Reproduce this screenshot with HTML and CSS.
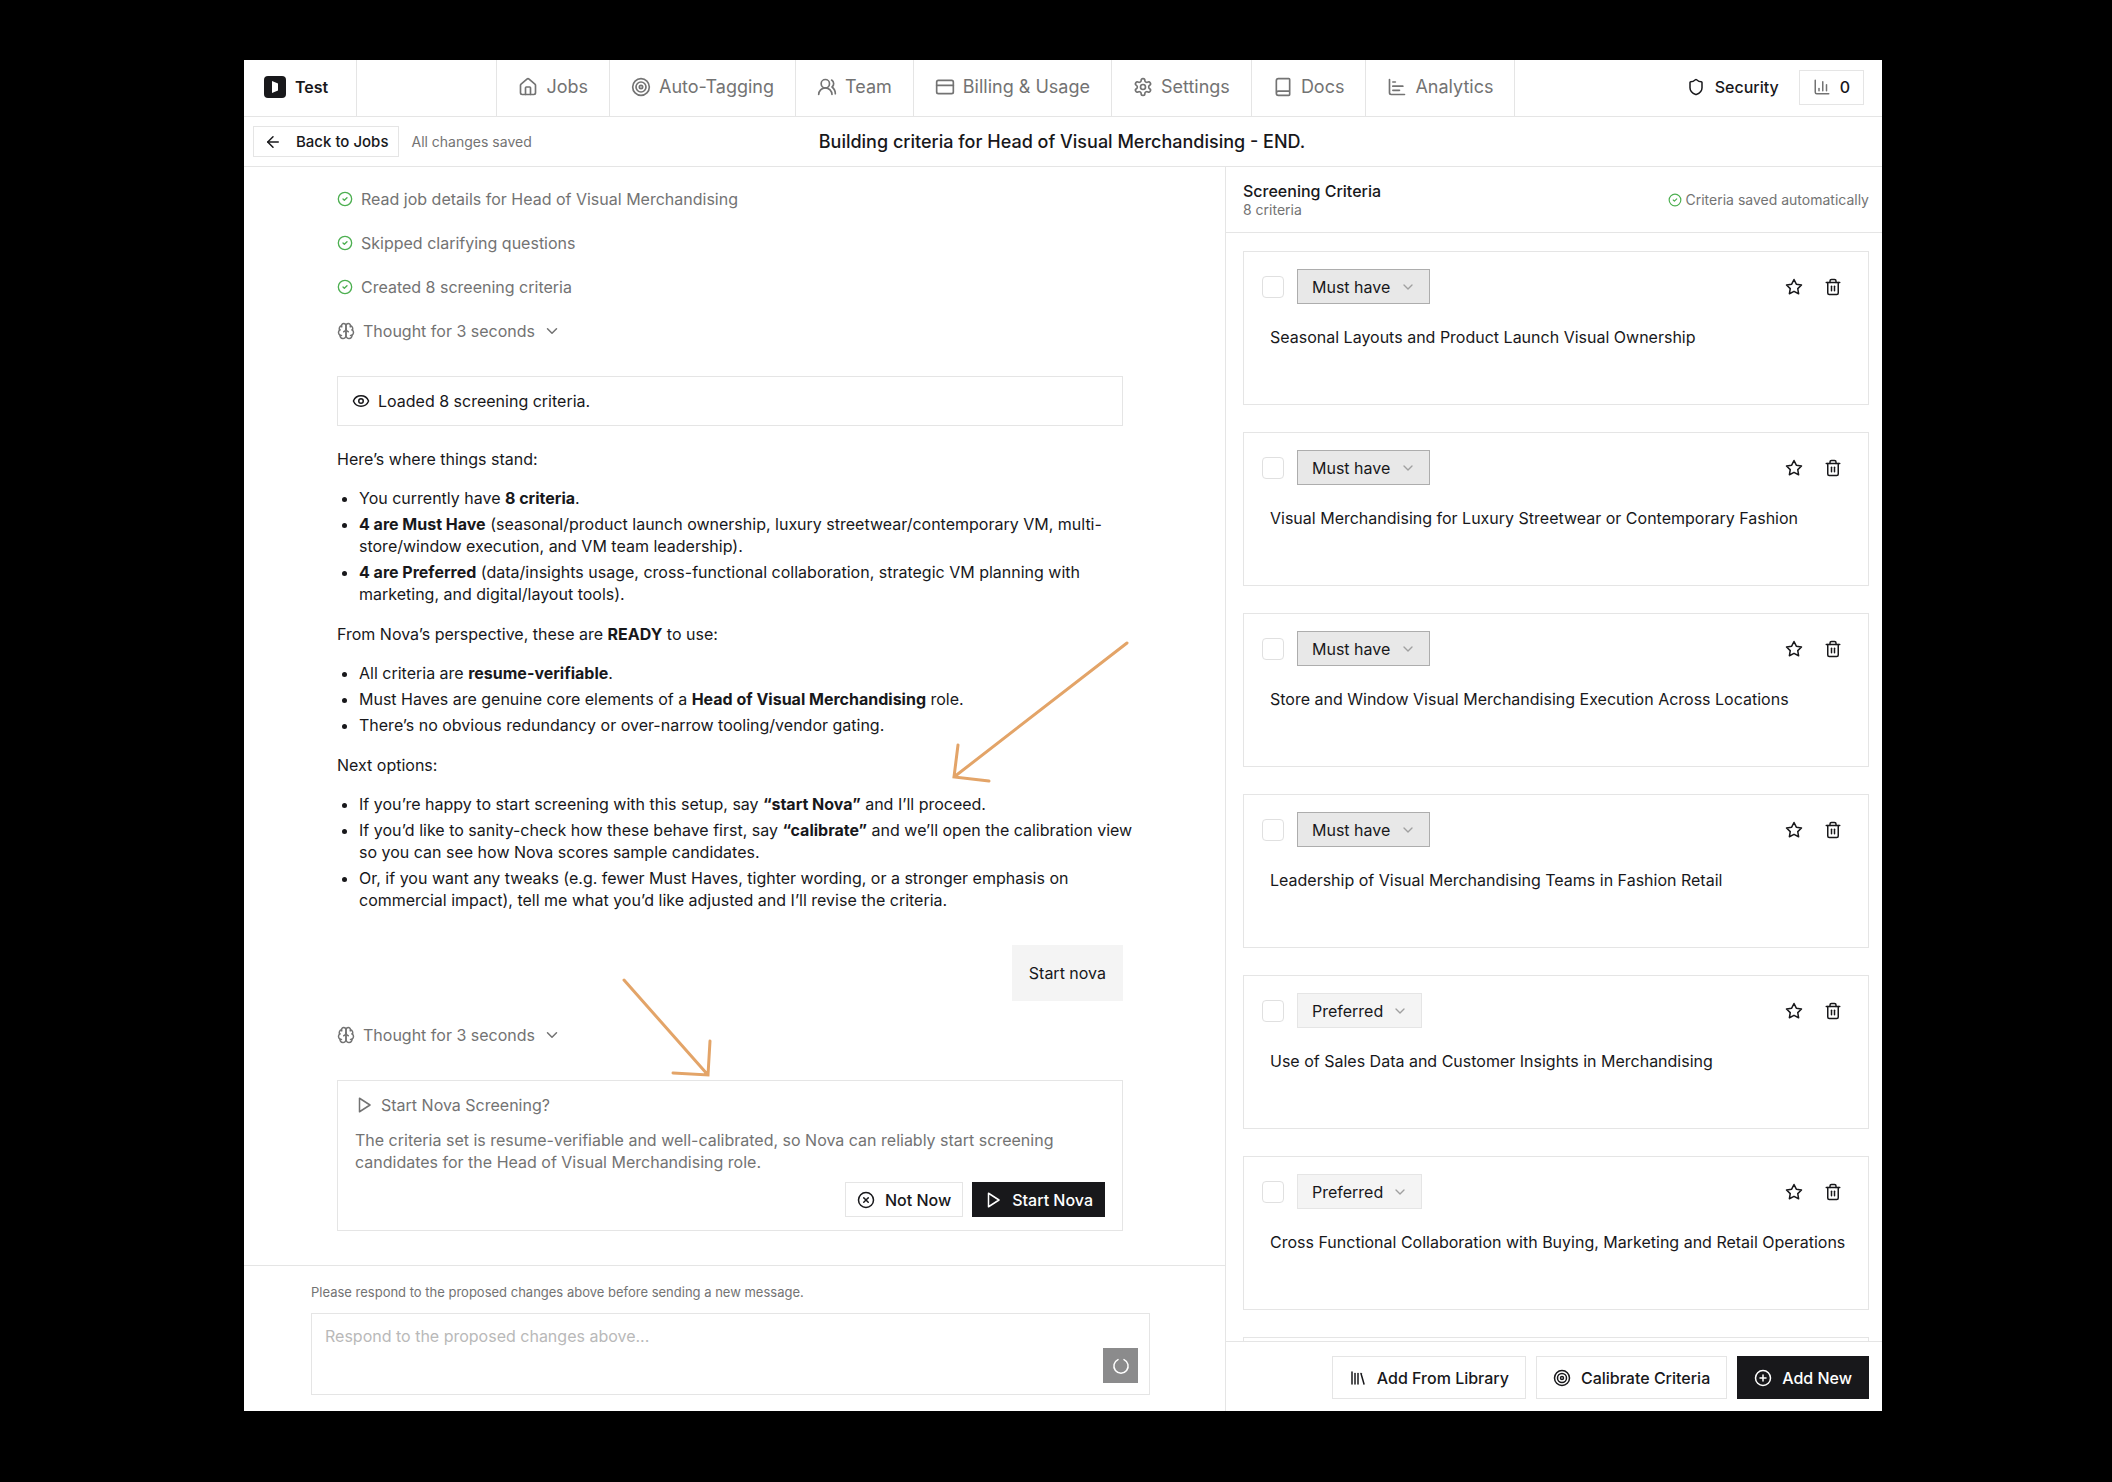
FILE: index.html
```html
<!DOCTYPE html>
<html lang="en">
<head>
  <meta charset="UTF-8">
  <meta name="viewport" content="width=device-width, initial-scale=1.0">
  <title>Building criteria</title>
  <link rel="stylesheet" href="styles.css">
</head>
<body>
  <!-- Icons -->
  <svg class="sprite" xmlns="http://www.w3.org/2000/svg">
    <symbol id="i-home" viewBox="0 0 24 24"><path d="M15 21v-8a1 1 0 0 0-1-1h-4a1 1 0 0 0-1 1v8"/><path d="M3 10a2 2 0 0 1 .7-1.5l7-6a2 2 0 0 1 2.600 0l7 6A2 2 0 0 1 21 10v9a2 2 0 0 1-2 2H5a2 2 0 0 1-2-2z"/></symbol>
    <symbol id="i-target" viewBox="0 0 24 24"><circle cx="12" cy="12" r="10"/><circle cx="12" cy="12" r="6"/><circle cx="12" cy="12" r="2"/></symbol>
    <symbol id="i-users" viewBox="0 0 24 24"><path d="M18 21a8 8 0 0 0-16 0"/><circle cx="10" cy="8" r="5"/><path d="M22 20c0-3.370-2-6.500-4-8a5 5 0 0 0-.450-8.300"/></symbol>
    <symbol id="i-card" viewBox="0 0 24 24"><rect x="2" y="4" width="20" height="16" rx="2"/><path d="M2 10h20"/></symbol>
    <symbol id="i-gear" viewBox="0 0 24 24"><path d="M12.220 2h-.440a2 2 0 0 0-2 2v.180a2 2 0 0 1-1 1.730l-.430.250a2 2 0 0 1-2 0l-.150-.080a2 2 0 0 0-2.730.730l-.220.380a2 2 0 0 0 .730 2.730l.150.100a2 2 0 0 1 1 1.720v.510a2 2 0 0 1-1 1.740l-.150.090a2 2 0 0 0-.730 2.730l.220.380a2 2 0 0 0 2.730.730l.150-.080a2 2 0 0 1 2 0l.430.250a2 2 0 0 1 1 1.730V20a2 2 0 0 0 2 2h.440a2 2 0 0 0 2-2v-.180a2 2 0 0 1 1-1.730l.430-.250a2 2 0 0 1 2 0l.150.080a2 2 0 0 0 2.730-.730l.220-.390a2 2 0 0 0-.730-2.730l-.150-.080a2 2 0 0 1-1-1.740v-.500a2 2 0 0 1 1-1.740l.150-.090a2 2 0 0 0 .730-2.730l-.220-.380a2 2 0 0 0-2.730-.730l-.150.080a2 2 0 0 1-2 0l-.430-.250a2 2 0 0 1-1-1.730V4a2 2 0 0 0-2-2z"/><circle cx="12" cy="12" r="3"/></symbol>
    <symbol id="i-book" viewBox="0 0 24 24"><path d="M4 19.500v-15A2.500 2.500 0 0 1 6.500 2H19a1 1 0 0 1 1 1v18a1 1 0 0 1-1 1H6.500a1 1 0 0 1 0-5H20"/></symbol>
    <symbol id="i-bars" viewBox="0 0 24 24"><path d="M3 3v16a2 2 0 0 0 2 2h16"/><path d="M7 16h8"/><path d="M7 11h12"/><path d="M7 6h3"/></symbol>
    <symbol id="i-shield" viewBox="0 0 24 24"><path d="M20 13c0 5-3.500 7.500-7.660 8.950a1 1 0 0 1-.670-.010C7.500 20.500 4 18 4 13V6a1 1 0 0 1 1-1c2 0 4.500-1.200 6.240-2.720a1.170 1.170 0 0 1 1.520 0C14.510 3.810 17 5 19 5a1 1 0 0 1 1 1z"/></symbol>
    <symbol id="i-chart" viewBox="0 0 24 24"><path d="M3 3v16a2 2 0 0 0 2 2h16"/><path d="M18 17V9"/><path d="M13 17V5"/><path d="M8 17v-3"/></symbol>
    <symbol id="i-back" viewBox="0 0 24 24"><path d="m12 19-7-7 7-7"/><path d="M19 12H5"/></symbol>
    <symbol id="i-check" viewBox="0 0 24 24"><circle cx="12" cy="12" r="10"/><path d="m9 12 2 2 4-4"/></symbol>
    <symbol id="i-brain" viewBox="0 0 24 24"><path d="M12 5a3 3 0 1 0-5.997.125 4 4 0 0 0-2.526 5.770 4 4 0 0 0 .556 6.588A4 4 0 1 0 12 18Z"/><path d="M12 5a3 3 0 1 1 5.997.125 4 4 0 0 1 2.526 5.770 4 4 0 0 1-.556 6.588A4 4 0 1 1 12 18Z"/><path d="M15 13a4.500 4.500 0 0 1-3-4 4.500 4.500 0 0 1-3 4"/><path d="M17.600 6.500a3 3 0 0 0 .400-1.375M6 5.125A3 3 0 0 0 6.400 6.500M3.477 10.900a4 4 0 0 1 .585-.396M19.938 10.500a4 4 0 0 1 .585.396M6 18a4 4 0 0 1-1.967-.516M19.967 17.480A4 4 0 0 1 18 18"/></symbol>
    <symbol id="i-down" viewBox="0 0 24 24"><path d="m6 9 6 6 6-6"/></symbol>
    <symbol id="i-eye" viewBox="0 0 24 24"><path d="M2.060 12.350a1 1 0 0 1 0-.700 10.750 10.750 0 0 1 19.880 0 1 1 0 0 1 0 .700 10.750 10.750 0 0 1-19.880 0"/><circle cx="12" cy="12" r="3"/></symbol>
    <symbol id="i-play" viewBox="0 0 24 24"><path d="M6 3l14 9-14 9z"/></symbol>
    <symbol id="i-cancel" viewBox="0 0 24 24"><circle cx="12" cy="12" r="10"/><path d="m15 9-6 6"/><path d="m9 9 6 6"/></symbol>
    <symbol id="i-plus" viewBox="0 0 24 24"><circle cx="12" cy="12" r="10"/><path d="M8 12h8"/><path d="M12 8v8"/></symbol>
    <symbol id="i-library" viewBox="0 0 24 24"><path d="m16 6 4 14"/><path d="M12 6v14"/><path d="M8 6v14"/><path d="M4 4v16"/></symbol>
    <symbol id="i-star" viewBox="0 0 24 24"><path d="m12 2 3.090 6.260L22 9.270l-5 4.870 1.180 6.880L12 17.770l-6.180 3.250L7 14.140 2 9.270l6.910-1.010z"/></symbol>
    <symbol id="i-trash" viewBox="0 0 24 24"><path d="M3 6h18"/><path d="M19 6v14a2 2 0 0 1-2 2H7a2 2 0 0 1-2-2V6"/><path d="M8 6V4a2 2 0 0 1 2-2h4a2 2 0 0 1 2 2v2"/><path d="M10 11v6"/><path d="M14 11v6"/></symbol>
    <symbol id="i-loader" viewBox="0 0 24 24"><path d="M16 3.500a9.500 9.500 0 1 1-8 0"/></symbol>
  </svg>

  <div class="app">
    <header class="topbar">
      <a href="#" class="brand">
        <svg class="logo" viewBox="0 0 22 22"><rect width="22" height="22" rx="4" fill="#18181b"/><path d="M8 5l6 2.500v7l-6 2.500z" fill="#fff"/></svg>
        <span>Test</span>
      </a>
      <nav class="main-nav">
        <a href="#" class="nav-link"><svg class="icon"><use href="#i-home"/></svg>Jobs</a>
        <a href="#" class="nav-link"><svg class="icon"><use href="#i-target"/></svg>Auto-Tagging</a>
        <a href="#" class="nav-link"><svg class="icon"><use href="#i-users"/></svg>Team</a>
        <a href="#" class="nav-link"><svg class="icon"><use href="#i-card"/></svg>Billing &amp; Usage</a>
        <a href="#" class="nav-link"><svg class="icon"><use href="#i-gear"/></svg>Settings</a>
        <a href="#" class="nav-link"><svg class="icon"><use href="#i-book"/></svg>Docs</a>
        <a href="#" class="nav-link"><svg class="icon"><use href="#i-bars"/></svg>Analytics</a>
      </nav>
      <div class="top-actions">
        <a href="#" class="security"><svg class="icon"><use href="#i-shield"/></svg>Security</a>
        <button type="button" class="btn usage"><svg class="icon"><use href="#i-chart"/></svg>0</button>
      </div>
    </header>

    <div class="subbar">
      <div class="subbar-left">
        <button type="button" class="btn back"><svg class="icon"><use href="#i-back"/></svg>Back to Jobs</button>
        <span class="save-state">All changes saved</span>
      </div>
      <h1 class="page-title">Building criteria for Head of Visual Merchandising - END.</h1>
    </div>

    <main class="workspace">
      <!-- Chat -->
      <section class="chat">
        <div class="messages">
          <p class="step"><svg class="icon check"><use href="#i-check"/></svg>Read job details for Head of Visual Merchandising</p>
          <p class="step"><svg class="icon check"><use href="#i-check"/></svg>Skipped clarifying questions</p>
          <p class="step"><svg class="icon check"><use href="#i-check"/></svg>Created 8 screening criteria</p>
          <button type="button" class="thought"><svg class="icon"><use href="#i-brain"/></svg>Thought for 3 seconds<svg class="icon"><use href="#i-down"/></svg></button>

          <div class="notice"><svg class="icon"><use href="#i-eye"/></svg>Loaded 8 screening criteria.</div>

          <div class="prose">
            <p>Here’s where things stand:</p>
            <ul>
              <li>You currently have <strong>8 criteria</strong>.</li>
              <li><strong>4 are Must Have</strong> (seasonal/product launch ownership, luxury streetwear/contemporary VM, multi-store/window execution, and VM team leadership).</li>
              <li><strong>4 are Preferred</strong> (data/insights usage, cross-functional collaboration, strategic VM planning with marketing, and digital/layout tools).</li>
            </ul>
            <p>From Nova’s perspective, these are <strong>READY</strong> to use:</p>
            <ul>
              <li>All criteria are <strong>resume-verifiable</strong>.</li>
              <li>Must Haves are genuine core elements of a <strong>Head of Visual Merchandising</strong> role.</li>
              <li>There’s no obvious redundancy or over-narrow tooling/vendor gating.</li>
            </ul>
            <p>Next options:</p>
            <ul>
              <li>If you’re happy to start screening with this setup, say <strong>“start Nova”</strong> and I’ll proceed.</li>
              <li>If you’d like to sanity-check how these behave first, say <strong>“calibrate”</strong> and we’ll open the calibration view so you can see how Nova scores sample candidates.</li>
              <li>Or, if you want any tweaks (e.g. fewer Must Haves, tighter wording, or a stronger emphasis on commercial impact), tell me what you’d like adjusted and I’ll revise the criteria.</li>
            </ul>
          </div>

          <p class="bubble">Start nova</p>

          <button type="button" class="thought"><svg class="icon"><use href="#i-brain"/></svg>Thought for 3 seconds<svg class="icon"><use href="#i-down"/></svg></button>

          <div class="proposal">
            <h2><svg class="icon"><use href="#i-play"/></svg>Start Nova Screening?</h2>
            <p>The criteria set is resume-verifiable and well-calibrated, so Nova can reliably start screening candidates for the Head of Visual Merchandising role.</p>
            <div class="proposal-actions">
              <button type="button" class="btn"><svg class="icon"><use href="#i-cancel"/></svg>Not Now</button>
              <button type="button" class="btn dark"><svg class="icon"><use href="#i-play"/></svg>Start Nova</button>
            </div>
          </div>

          <!-- Pointer arrows over the conversation -->
          <svg class="arrow arrow-reply" viewBox="0 0 180 144"><path d="M176 4 3 138M7 106 3 138l35 4"/></svg>
          <svg class="arrow arrow-card" viewBox="0 0 92 104"><path d="M4 4 88 99M90 65l-2 34-35-2"/></svg>
        </div>

        <form class="composer">
          <label for="reply">Please respond to the proposed changes above before sending a new message.</label>
          <div class="composer-box">
            <textarea id="reply" placeholder="Respond to the proposed changes above..."></textarea>
            <button type="button" class="send" aria-label="Sending"><svg class="icon"><use href="#i-loader"/></svg></button>
          </div>
        </form>
      </section>

      <!-- Criteria -->
      <aside class="criteria">
        <div class="criteria-head">
          <div>
            <h2>Screening Criteria</h2>
            <p>8 criteria</p>
          </div>
          <p class="autosave"><svg class="icon check"><use href="#i-check"/></svg>Criteria saved automatically</p>
        </div>
        <div class="criteria-list" id="criteria-list"></div>
        <div class="criteria-foot">
          <button type="button" class="btn"><svg class="icon"><use href="#i-library"/></svg>Add From Library</button>
          <button type="button" class="btn"><svg class="icon"><use href="#i-target"/></svg>Calibrate Criteria</button>
          <button type="button" class="btn dark"><svg class="icon"><use href="#i-plus"/></svg>Add New</button>
        </div>
      </aside>
    </main>
  </div>

  <script src="script.js"></script>
</body>
</html>
```

FILE: styles.css
```css
* {
  margin: 0;
  padding: 0;
  box-sizing: border-box;
}

body {
  height: 100vh;
  padding: 60px 230px 71px 244px;
  background-color: #000;
  color: #18181b;
  font-family: Inter, "Liberation Sans", sans-serif;
  font-size: 16px;
  line-height: 22px;
}

button,
select,
textarea {
  font: inherit;
  color: inherit;
}

button {
  cursor: pointer;
}

a {
  color: inherit;
  text-decoration: none;
}

.sprite {
  display: none;
}

.icon {
  width: 18px;
  height: 18px;
  flex: none;
  fill: none;
  stroke: currentColor;
  stroke-width: 2;
  stroke-linecap: round;
  stroke-linejoin: round;
}

.check {
  width: 16px;
  height: 16px;
  color: #4caf50;
}

.btn {
  display: inline-flex;
  align-items: center;
  gap: 10px;
  height: 35px;
  padding: 0 11px;
  border: 1px solid #e5e5e5;
  background-color: #fff;
  font-weight: 500;
  white-space: nowrap;
}

.btn.dark {
  border-color: #18181b;
  background-color: #18181b;
  color: #fff;
}

.app {
  display: flex;
  flex-direction: column;
  height: 100%;
  background-color: #fff;
}

/* Top bar */
.topbar {
  display: flex;
  justify-content: space-between;
  height: 57px;
  flex: none;
  border-bottom: 1px solid #e5e5e5;
}

.brand {
  display: flex;
  align-items: center;
  gap: 9px;
  padding: 0 28px 2px 20px;
  border-right: 1px solid #e5e5e5;
  font-weight: 600;
}

.logo {
  width: 22px;
  height: 22px;
}

.main-nav {
  display: flex;
  border-left: 1px solid #e5e5e5;
  color: #737373;
  font-size: 18px;
}

.nav-link {
  display: flex;
  align-items: center;
  gap: 8px;
  padding: 0 21px 2px;
  border-right: 1px solid #e5e5e5;
}

.nav-link .icon {
  width: 20px;
  height: 20px;
  stroke-width: 2;
}

.top-actions {
  display: flex;
  align-items: center;
  gap: 20px;
  padding: 0 18px 2px 32px;
}

.security {
  display: flex;
  align-items: center;
  gap: 10px;
  font-weight: 500;
}

.usage {
  gap: 9px;
  padding: 0 13px;
}

.usage .icon {
  color: #737373;
}

/* Sub bar */
.subbar {
  display: grid;
  grid-template-columns: 1fr auto 1fr;
  align-items: center;
  height: 50px;
  flex: none;
  padding: 0 11px 0 9px;
  border-bottom: 1px solid #e5e5e5;
}

.subbar-left {
  display: flex;
  align-items: center;
  gap: 12px;
}

.back {
  height: 31px;
  gap: 14px;
  padding: 0 10px;
  font-size: 15px;
}

.save-state {
  color: #737373;
  font-size: 14px;
}

.page-title {
  font-size: 18px;
  font-weight: 500;
}

/* Workspace */
.workspace {
  display: flex;
  flex: 1;
  min-height: 0;
}

.chat {
  flex: 3;
  display: flex;
  flex-direction: column;
  min-width: 0;
}

.messages {
  position: relative;
  display: flex;
  flex-direction: column;
  flex: 1;
  padding: 21px 102px 0 93px;
}

.step {
  display: flex;
  align-items: center;
  gap: 8px;
  margin-bottom: 22px;
  color: #737373;
}

.thought {
  display: flex;
  align-items: center;
  align-self: flex-start;
  gap: 8px;
  border: none;
  background: none;
  color: #737373;
}

.notice {
  display: flex;
  align-items: center;
  gap: 8px;
  margin: 34px 0 22px;
  padding: 13px 14px;
  border: 1px solid #e5e5e5;
}

.prose p {
  margin-bottom: 17px;
}

.prose ul {
  margin: 0 -16px 18px 0;
  padding-left: 22px;
}

.prose li + li {
  margin-top: 4px;
}

.bubble {
  align-self: flex-end;
  margin: 16px 0 23px;
  padding: 17px;
  background-color: #f4f4f4;
}

.proposal {
  margin-top: 34px;
  padding: 13px 17px;
  border: 1px solid #e5e5e5;
  color: #737373;
}

.proposal h2 {
  display: flex;
  align-items: center;
  gap: 8px;
  margin-bottom: 13px;
  font-size: 16px;
  font-weight: 400;
}

.proposal-actions {
  display: flex;
  justify-content: flex-end;
  gap: 9px;
  margin-top: 9px;
  color: #18181b;
}

.arrow {
  position: absolute;
  fill: none;
  stroke: #e3a468;
  stroke-width: 3;
  stroke-linecap: round;
}

.arrow-reply {
  top: 472px;
  right: 94px;
  width: 180px;
}

.arrow-card {
  top: 809px;
  left: 376px;
  width: 92px;
}

.composer {
  display: flex;
  flex-direction: column;
  gap: 10px;
  padding: 15px 75px 16px 67px;
  border-top: 1px solid #e5e5e5;
  font-size: 13px;
  color: #737373;
}

.composer-box {
  display: flex;
  align-items: flex-end;
  padding: 11px 11px 11px 13px;
  border: 1px solid #e5e5e5;
}

.composer-box textarea {
  flex: 1;
  height: 58px;
  border: none;
  outline: none;
  resize: none;
  background: none;
  font-size: 16px;
}

.composer-box textarea::placeholder {
  color: #b9b9b9;
}

.send {
  display: grid;
  place-items: center;
  width: 35px;
  height: 35px;
  border: none;
  background-color: #8b8b8c;
  color: #fff;
}

/* Criteria panel */
.criteria {
  flex: 2;
  display: flex;
  flex-direction: column;
  min-width: 657px;
  border-left: 1px solid #e5e5e5;
}

.criteria-head {
  display: flex;
  justify-content: space-between;
  align-items: center;
  height: 66px;
  flex: none;
  padding: 0 13px 0 17px;
  border-bottom: 1px solid #e5e5e5;
}

.criteria-head h2 {
  font-size: 16px;
  font-weight: 500;
  line-height: 20px;
}

.criteria-head p {
  color: #737373;
  font-size: 14px;
  line-height: 18px;
}

.autosave {
  display: flex;
  align-items: center;
  gap: 4px;
}

.autosave .check {
  width: 14px;
  height: 14px;
}

.criteria-list {
  display: flex;
  flex-direction: column;
  flex: 1;
  gap: 27px;
  min-height: 0;
  padding: 18px 13px 0 17px;
  overflow: hidden;
}

.criterion {
  flex: none;
  height: 154px;
  padding: 17px 18px 0;
  border: 1px solid #e5e5e5;
}

.criterion-top {
  display: flex;
  align-items: center;
  gap: 13px;
  margin-bottom: 22px;
}

.criterion-top input {
  width: 22px;
  height: 22px;
  appearance: none;
  border: 1px solid #e0e0e0;
  border-radius: 4px;
}

.level {
  position: relative;
  display: flex;
  align-items: center;
  margin-right: auto;
}

.level select {
  width: 125px;
  height: 35px;
  padding: 0 14px;
  appearance: none;
  border: 1px solid #e5e5e5;
  background-color: #f4f4f4;
}

.level.must select {
  width: 133px;
  border-color: #adadad;
  background-color: #e8e8e8;
}

.level .icon {
  position: absolute;
  right: 14px;
  width: 16px;
  height: 16px;
  color: #a0a0a0;
  pointer-events: none;
}

.icon-btn {
  display: grid;
  place-items: center;
  width: 26px;
  height: 26px;
  border: none;
  background: none;
}

.criterion-top .icon-btn:last-child {
  margin-right: 4px;
}

/* Keep long names on one line */
.criterion-text {
  padding-left: 8px;
  white-space: nowrap;
}

.criteria-foot {
  display: flex;
  justify-content: flex-end;
  gap: 10px;
  flex: none;
  padding: 14px 13px 12px;
  border-top: 1px solid #e5e5e5;
}

.criteria-foot .btn {
  height: 43px;
  padding: 0 16px;
}
```

FILE: script.js
```js
const criteria = [
  { text: 'Seasonal Layouts and Product Launch Visual Ownership', level: 'Must have' },
  { text: 'Visual Merchandising for Luxury Streetwear or Contemporary Fashion', level: 'Must have' },
  { text: 'Store and Window Visual Merchandising Execution Across Locations', level: 'Must have' },
  { text: 'Leadership of Visual Merchandising Teams in Fashion Retail', level: 'Must have' },
  { text: 'Use of Sales Data and Customer Insights in Merchandising', level: 'Preferred' },
  { text: 'Cross Functional Collaboration with Buying, Marketing and Retail Operations', level: 'Preferred' },
  { text: '', level: 'Preferred' }
];

const levels = ['Must have', 'Preferred'];
const list = document.getElementById('criteria-list');

criteria.forEach((item, i) => {
  const card = document.createElement('article');
  card.className = 'criterion';
  card.innerHTML = `
    <div class="criterion-top">
      <input type="checkbox" id="pick-${i}" aria-label="Select criterion">
      <div class="level ${item.level === 'Must have' ? 'must' : ''}">
        <select aria-label="Importance">
          ${levels.map(l => `<option ${l === item.level ? 'selected' : ''}>${l}</option>`).join('')}
        </select>
        <svg class="icon"><use href="#i-down"/></svg>
      </div>
      <button type="button" class="icon-btn" aria-label="Favourite"><svg class="icon"><use href="#i-star"/></svg></button>
      <button type="button" class="icon-btn" aria-label="Delete"><svg class="icon"><use href="#i-trash"/></svg></button>
    </div>
    <p class="criterion-text">${item.text}</p>
  `;
  list.appendChild(card);
});
```
